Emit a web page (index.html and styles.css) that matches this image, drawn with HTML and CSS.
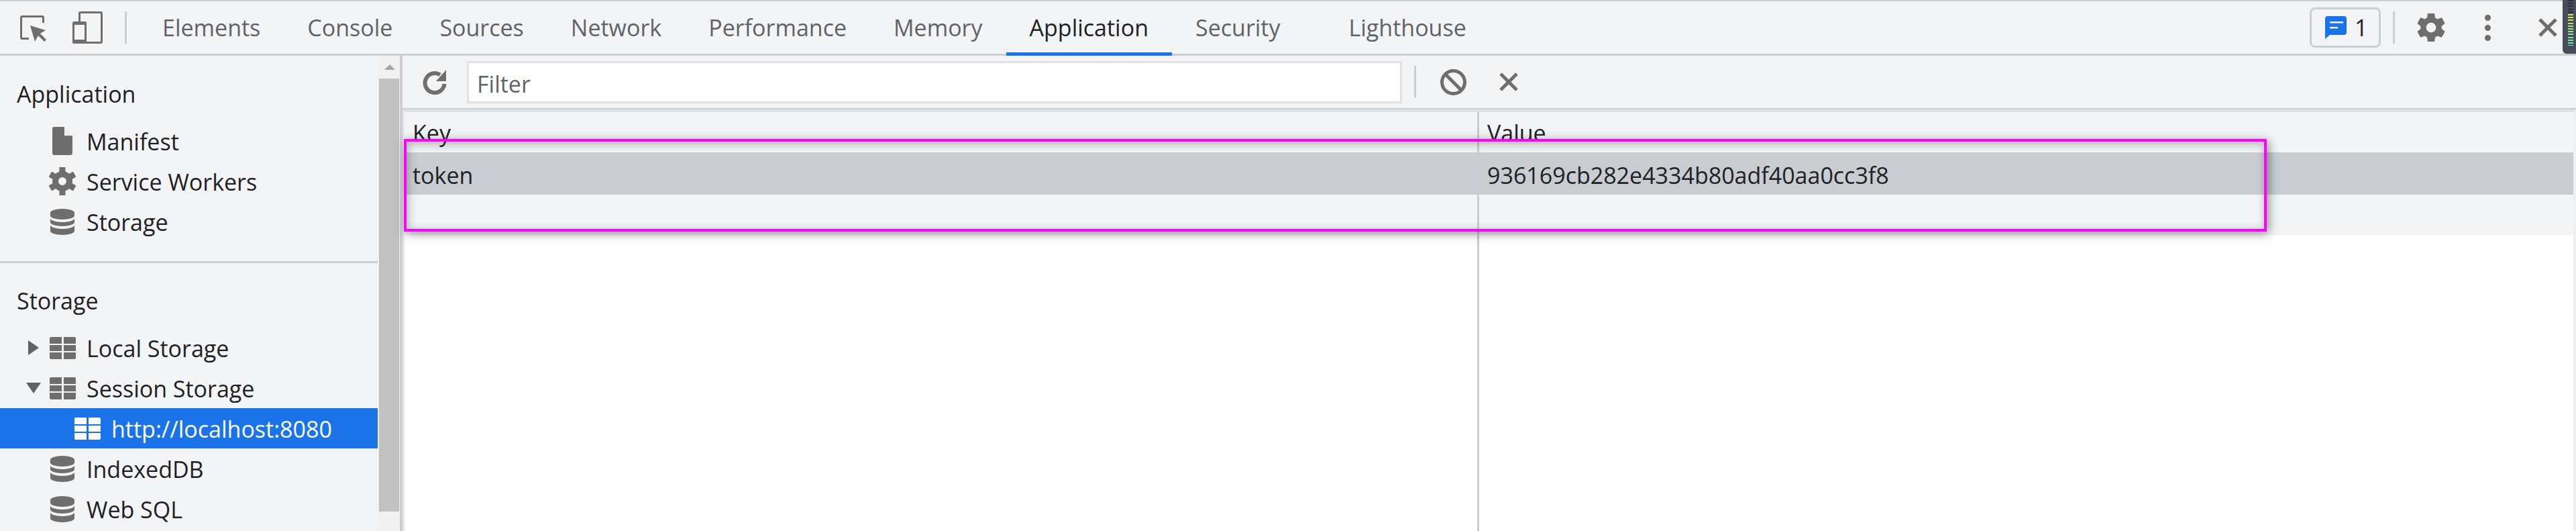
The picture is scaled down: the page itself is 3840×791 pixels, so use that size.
FILE: index.html
```html
<!DOCTYPE html>
<html lang="en">
<head>
<meta charset="utf-8">
<title>DevTools Application panel</title>
<link rel="stylesheet" href="styles.css">
</head>
<body>
<svg class="defs" width="0" height="0" aria-hidden="true">
  <defs>
    <symbol id="i-db" viewBox="0 0 36 39">
      <path d="M0 6a18 6 0 0 1 36 0v4a18 6 0 0 1-36 0z"/>
      <path d="M0 14a18 6 0 0 0 36 0v6a18 6 0 0 1-36 0z"/>
      <path d="M0 24a18 6 0 0 0 36 0v9a18 6 0 0 1-36 0z"/>
    </symbol>
    <symbol id="i-table" viewBox="0 0 39 33">
      <path d="M2 0h16v10H0V2a2 2 0 0 1 2-2zM21 0h16a2 2 0 0 1 2 2v8H21zM0 12h18v9H0zM21 12h18v9H21zM0 23h18v10H2a2 2 0 0 1-2-2zM21 23h18v8a2 2 0 0 1-2 2H21z"/>
    </symbol>
    <symbol id="i-x" viewBox="0 0 30 30">
      <path d="M3 3l24 24M27 3L3 27" class="x-line"/>
    </symbol>
  </defs>
</svg>

<div class="app">
  <header class="topbar">
    <svg class="ic-inspect" viewBox="0 0 40 40">
      <path class="line" d="M13 34.5H3A1.5 1.5 0 0 1 1.5 33V3A1.5 1.5 0 0 1 3 1.5H33A1.5 1.5 0 0 1 34.5 3V11"/>
      <path d="M15 15l23 7-8 5 9 9-3 3-9-9-5 9z"/>
    </svg>
    <svg class="ic-device" viewBox="0 0 45 48">
      <path class="line" d="M10.5 15V3A1.5 1.5 0 0 1 12 1.5H42A1.5 1.5 0 0 1 43.500 3V45A1.500 1.500 0 0 1 42 46.500H21"/>
      <path fill-rule="evenodd" d="M2 15h17a2 2 0 0 1 2 2v31H2a2 2 0 0 1-2-2V17a2 2 0 0 1 2-2zM3 20v22h15V20z"/>
    </svg>
    <span class="vsep vsep-tabs"></span>
    <nav class="tabs">
      <span class="tab">Elements</span>
      <span class="tab">Console</span>
      <span class="tab">Sources</span>
      <span class="tab">Network</span>
      <span class="tab">Performance</span>
      <span class="tab">Memory</span>
      <span class="tab tab-active">Application</span>
      <span class="tab">Security</span>
      <span class="tab tab-last">Lighthouse</span>
    </nav>
    <div class="top-actions">
      <span class="issues">
        <svg class="ic-chat" viewBox="0 0 32 34">
          <path d="M4 0H28a4 4 0 0 1 4 4V24a4 4 0 0 1-4 4H7L0 34V4A4 4 0 0 1 4 0z"/>
          <path class="chat-line" d="M7 8h20v2.500H7zM7 16h12v2.500H7z"/>
        </svg>
        <span class="issues-count">1</span>
      </span>
      <span class="vsep vsep-actions"></span>
      <svg class="ic-settings" viewBox="2 2 20 20">
        <path d="M19.430 12.980c.04-.32.07-.64.07-.98s-.03-.66-.07-.98l2.110-1.650c.19-.15.24-.42.12-.64l-2-3.460c-.12-.22-.39-.3-.61-.22l-2.490 1c-.52-.4-1.080-.73-1.690-.98l-.38-2.650C14.460 2.180 14.250 2 14 2h-4c-.25 0-.46.18-.49.42l-.38 2.650c-.61.25-1.170.59-1.690.98l-2.490-1c-.23-.09-.49 0-.61.22l-2 3.460c-.13.22-.07.49.12.64l2.110 1.650c-.04.32-.07.65-.07.98s.03.66.07.98l-2.110 1.650c-.19.15-.24.42-.12.64l2 3.460c.12.22.39.3.61.22l2.490-1c.52.4 1.080.73 1.690.98l.38 2.650c.03.24.24.42.49.42h4c.25 0 .46-.18.49-.42l.38-2.650c.61-.25 1.170-.59 1.690-.98l2.490 1c.23.09.49 0 .61-.22l2-3.460c.12-.22.07-.49-.12-.64l-2.010-1.650zM12 15.500c-1.930 0-3.500-1.570-3.500-3.500s1.570-3.500 3.500-3.500 3.500 1.570 3.500 3.500-1.570 3.500-3.500 3.500z"/>
      </svg>
      <svg class="ic-dots" viewBox="0 0 13 39">
        <circle cx="6.500" cy="4.500" r="4.500"/><circle cx="6.500" cy="19.500" r="4.500"/><circle cx="6.500" cy="34.500" r="4.500"/>
      </svg>
      <svg class="ic-x ic-x-top"><use href="#i-x"/></svg>
    </div>
  </header>

  <div class="panels">
    <aside class="sidebar">
      <div class="tree">
        <section class="group group-app">
          <h2 class="group-title">Application</h2>
          <div class="row">
            <span class="arrow-slot"></span>
            <span class="icon-slot">
              <svg class="ic-doc" viewBox="0 0 30 42">
                <path d="M3 0H18V13H30V39a3 3 0 0 1-3 3H3a3 3 0 0 1-3-3V3a3 3 0 0 1 3-3z"/>
                <path class="doc-fold" d="M19 1L30 12H19z"/>
              </svg>
            </span>
            <span class="row-label">Manifest</span>
          </div>
          <div class="row">
            <span class="arrow-slot"></span>
            <span class="icon-slot">
              <svg class="ic-cog" viewBox="0 0 40 42">
                <g class="cog-teeth">
                  <rect x="15.500" y="0" width="9" height="42"/>
                  <rect x="15.500" y="0" width="9" height="42" transform="rotate(60 20 21)"/>
                  <rect x="15.500" y="0" width="9" height="42" transform="rotate(120 20 21)"/>
                </g>
                <circle class="cog-ring" cx="20" cy="21" r="10.500"/>
              </svg>
            </span>
            <span class="row-label">Service Workers</span>
          </div>
          <div class="row">
            <span class="arrow-slot"></span>
            <span class="icon-slot"><svg class="ic-db"><use href="#i-db"/></svg></span>
            <span class="row-label">Storage</span>
          </div>
        </section>
        <section class="group group-storage">
          <h2 class="group-title">Storage</h2>
          <div class="row">
            <span class="arrow-slot"><span class="arrow-right"></span></span>
            <span class="icon-slot"><svg class="ic-table"><use href="#i-table"/></svg></span>
            <span class="row-label">Local Storage</span>
          </div>
          <div class="row">
            <span class="arrow-slot"><span class="arrow-down"></span></span>
            <span class="icon-slot"><svg class="ic-table"><use href="#i-table"/></svg></span>
            <span class="row-label">Session Storage</span>
          </div>
          <div class="row row-child row-selected">
            <span class="arrow-slot"></span>
            <span class="icon-slot"><svg class="ic-table"><use href="#i-table"/></svg></span>
            <span class="row-label">http://localhost:8080</span>
          </div>
          <div class="row">
            <span class="arrow-slot"></span>
            <span class="icon-slot"><svg class="ic-db"><use href="#i-db"/></svg></span>
            <span class="row-label">IndexedDB</span>
          </div>
          <div class="row">
            <span class="arrow-slot"></span>
            <span class="icon-slot"><svg class="ic-db"><use href="#i-db"/></svg></span>
            <span class="row-label">Web SQL</span>
          </div>
        </section>
      </div>
      <div class="scrollbar">
        <div class="scroll-up"><span class="scroll-arrow"></span></div>
        <div class="scroll-thumb"></div>
      </div>
    </aside>

    <main class="main">
      <div class="filterbar">
        <svg class="ic-refresh" viewBox="0 0 36 37">
          <path class="refresh-arc" d="M26 7.500A14.500 14.500 0 1 0 32.500 21"/>
          <path d="M35 0V17H20z"/>
        </svg>
        <div class="filter-input">Filter</div>
        <span class="vsep vsep-filter"></span>
        <svg class="ic-block" viewBox="0 0 39 39">
          <circle class="block-ring" cx="19.500" cy="19.500" r="17"/>
          <path class="block-line" d="M8 8l23 23"/>
        </svg>
        <svg class="ic-x ic-x-filter"><use href="#i-x"/></svg>
      </div>
      <div class="grid">
        <div class="col col-key">
          <div class="cell cell-head">Key</div>
          <div class="cell cell-selected">token</div>
          <div class="cell cell-empty"></div>
        </div>
        <div class="col col-value">
          <div class="cell cell-head">Value</div>
          <div class="cell cell-selected">936169cb282e4334b80adf40aa0cc3f8</div>
          <div class="cell cell-empty"></div>
        </div>
      </div>
    </main>
  </div>

  <div class="highlight"></div>
  <div class="meter"><div class="meter-bars"></div></div>
</div>
</body>
</html>
```
FILE: styles.css
```css
* { box-sizing: border-box; }
html, body { margin: 0; padding: 0; }
body {
  width: 3840px;
  height: 791px;
  overflow: hidden;
  background: #fff;
  font-family: "Open Sans", "Noto Sans", sans-serif;
  font-size: 34px;
  color: #202124;
}
svg { display: block; flex: none; fill: #6e6e6e; }
.defs { position: absolute; }
.line { fill: none; stroke: #6e6e6e; stroke-width: 3; }
.x-line { fill: none; stroke: #6e6e6e; stroke-width: 5; }

.app { position: relative; width: 3840px; height: 791px; display: flex; flex-direction: column; }

/* top toolbar */
.topbar {
  height: 83px;
  flex: none;
  display: flex;
  align-items: center;
  padding-left: 30px;
  padding-right: 27px;
  background: #f3f4f6;
  border-top: 2px solid #cdced4;
  border-bottom: 3px solid #cdced4;
}
.ic-inspect { width: 40px; height: 40px; margin-top: 4px; }
.ic-device { width: 45px; height: 48px; margin-left: 38px; }
.vsep { display: block; width: 3px; height: 48px; background: #cdced4; flex: none; }
.vsep-tabs { margin-left: 33px; }
.tabs { display: flex; height: 100%; margin-left: 20px; }
.tab {
  display: flex;
  align-items: center;
  height: 100%;
  padding: 0 35px 0 33px;
  color: #5f6368;
  position: relative;
}
.tab + .tab { padding-left: 35px; }
.tab-active { color: #202124; }
.tab-active::after {
  content: "";
  position: absolute;
  left: 0;
  right: 0;
  bottom: -3px;
  height: 5px;
  background: #1a73e8;
}
.tab-last { margin-left: 32px; }
.top-actions { margin-left: auto; display: flex; align-items: center; }
.issues {
  width: 106px;
  height: 60px;
  border: 3px solid #cdced4;
  border-radius: 8px;
  display: flex;
  align-items: center;
  padding-left: 20px;
  margin-right: 18px;
}
.ic-chat { width: 32px; height: 34px; fill: #1a73e8; }
.chat-line { fill: #f3f4f6; }
.issues-count { margin-left: 12px; }
.ic-settings { width: 42px; height: 42px; margin-left: 33px; }
.ic-dots { width: 13px; height: 39px; margin-left: 57px; }
.ic-x { width: 30px; height: 30px; }
.ic-x-top { margin-left: 68px; }

/* panels */
.panels { flex: 1; display: flex; min-height: 0; }
.sidebar {
  width: 600px;
  flex: none;
  display: flex;
  background: #f3f4f6;
  border-right: 4px solid #cdced4;
}
.tree { width: 563px; flex: none; overflow: hidden; }
.group-app { padding-top: 27px; padding-bottom: 29px; border-bottom: 3px solid #cdced4; }
.group-storage { padding-top: 26px; }
.group-title {
  margin: 0 0 10px;
  padding-left: 25px;
  height: 60px;
  line-height: 60px;
  font-size: inherit;
  font-weight: 400;
}
.row { height: 60px; display: flex; align-items: center; padding-left: 33px; }
.row-child { padding-left: 70px; }
.row-label { padding-top: 1px; }
.row-selected { background: #1a73e8; color: #fff; }
.row-selected .ic-table { fill: #fafafa; }
.arrow-slot { width: 33px; display: flex; justify-content: center; flex: none; }
.icon-slot { width: 54px; margin-right: 9px; display: flex; justify-content: center; flex: none; }
.arrow-right {
  width: 0; height: 0;
  border-top: 11px solid transparent;
  border-bottom: 11px solid transparent;
  border-left: 16px solid #5f6368;
}
.arrow-down {
  width: 0; height: 0;
  border-left: 11.500px solid transparent;
  border-right: 11.500px solid transparent;
  border-top: 16px solid #5f6368;
}
.ic-doc { width: 30px; height: 42px; }
.doc-fold { fill: #eceded; }
.ic-cog { width: 40px; height: 42px; }
.cog-ring { fill: #f3f4f6; stroke: #6e6e6e; stroke-width: 9; }
.cog-teeth rect { fill: #6e6e6e; }
.ic-db { width: 36px; height: 39px; }
.ic-table { width: 39px; height: 33px; }

.scrollbar { width: 33px; flex: none; background: #f1f1f1; padding-left: 2px; }
.scroll-up { height: 34px; display: flex; justify-content: center; align-items: center; }
.scroll-arrow {
  width: 0; height: 0;
  border-left: 8px solid transparent;
  border-right: 8px solid transparent;
  border-bottom: 8px solid #a3a3a3;
}
.scroll-thumb { width: 30px; height: 645px; background: #c1c1c1; }

/* main */
.main { flex: 1; min-width: 0; display: flex; flex-direction: column; }
.filterbar {
  height: 80px;
  flex: none;
  display: flex;
  align-items: center;
  padding-left: 30px;
  background: #f3f4f6;
  border-bottom: 2px solid #cdced4;
}
.ic-refresh { width: 36px; height: 37px; }
.refresh-arc { fill: none; stroke: #6e6e6e; stroke-width: 6; }
.filter-input {
  width: 1394px;
  height: 63px;
  margin-left: 30px;
  border: 3px solid #e0e1e3;
  background: #fff;
  color: #5f6368;
  padding: 5px 0 0 12px;
  line-height: 52px;
}
.vsep-filter { margin-left: 18px; }
.ic-block { width: 39px; height: 39px; margin-left: 36px; }
.block-ring, .block-line { fill: none; stroke: #6e6e6e; stroke-width: 5; }
.ic-x-filter { margin-left: 48px; }

.grid {
  flex: 1;
  display: flex;
  min-height: 0;
  border-top: 4px solid #e0e1e3;
  border-left: 3px solid #e6e7e9;
  border-right: 4px solid #eeeff1;
}
.col { display: flex; flex-direction: column; }
.col-key { width: 1602px; flex: none; border-right: 3px solid #c9ccd1; }
.col-value { flex: 1; min-width: 0; }
.col-key .cell { padding-left: 12px; }
.col-value .cell { padding-left: 12px; }
.cell { display: flex; align-items: center; flex: none; }
.cell-head { height: 60px; padding-top: 2px; background: #f3f4f6; }
.cell-selected { height: 63px; padding-top: 5px; background: #c9ccd1; }
.cell-empty { height: 60px; background: #f3f4f6; }

/* overlays */
.highlight {
  position: absolute;
  left: 602px;
  top: 207px;
  width: 2777px;
  height: 138px;
  border: 4px solid #ff00ff;
  box-shadow: 3px 3px 14px rgba(0, 0, 0, .42), inset 2px 3px 14px rgba(0, 0, 0, .3);
}
.meter {
  position: absolute;
  right: 0;
  top: 0;
  width: 20px;
  height: 80px;
  background: #484d5b;
  border-bottom-left-radius: 6px;
  padding: 0 4px 0 8px;
}
.meter-bars {
  position: relative;
  height: 68px;
  background: linear-gradient(to bottom, #2b2e38 0, #2b2e38 20px, #d9e85c 21px, #a8e56f 40px, #5ee6bd 68px);
}
.meter-bars::after {
  content: "";
  position: absolute;
  inset: 0;
  background: repeating-linear-gradient(to bottom, transparent 0, transparent 2px, #484d5b 2px, #484d5b 4.200px);
}
```
